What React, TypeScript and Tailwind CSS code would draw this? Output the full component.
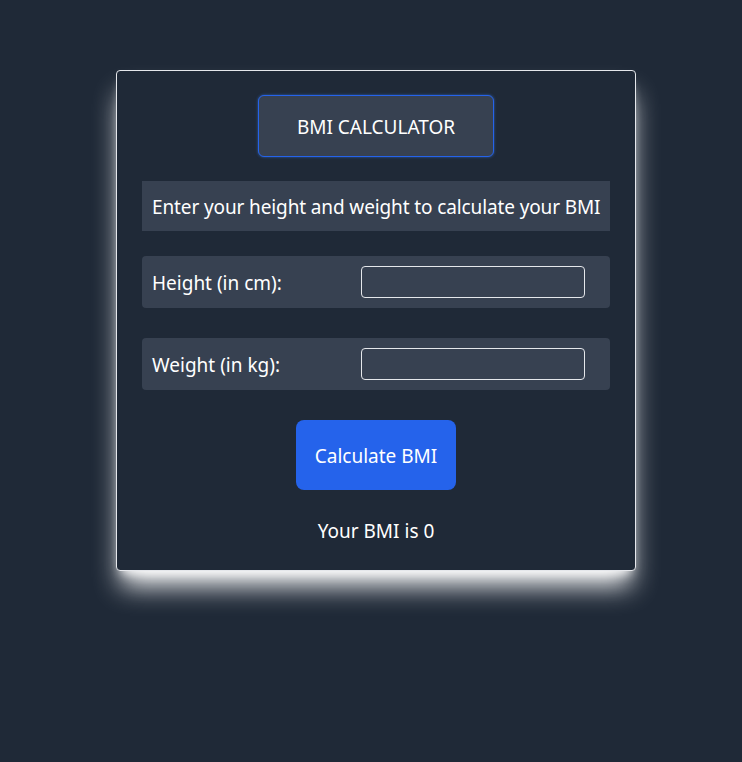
import React, { useState } from "react";

export default function App() {
  const [h, setH] = useState("");
  const [w, setW] = useState("");
  const [bmi, setBmi] = useState(0);
  const calc = () => {
    const hh = parseFloat(h) / 100;
    const ww = parseFloat(w);
    if (hh > 0 && ww > 0) setBmi(Math.round((ww / (hh * hh)) * 100) / 100);
  };
  return (
    <div
      className="min-h-[762px] w-full bg-[#1f2937] text-white pt-[70px]"
      style={{ fontFamily: '"Noto Sans", "Open Sans", sans-serif' }}
    >
      <div className="ml-[116px] w-[520px] h-[501px] rounded-[4px] border border-[#e5e7eb] bg-[#1f2937] shadow-xl shadow-white/95 px-[25px] pt-[24px] flex flex-col items-center">
        <div className="w-[236px] h-[62px] pt-[2px] rounded-md border border-[#2563eb] bg-[#374151] shadow-[0_0_3px_rgba(59,130,246,0.6)] flex items-center justify-center text-[19px]">
          BMI CALCULATOR
        </div>
        <div className="mt-[24px] w-full h-[50px] pt-[2px] bg-[#374151] flex items-center px-[10px] text-[19px] tracking-[-0.12px] whitespace-nowrap">
          Enter your height and weight to calculate your BMI
        </div>
        <div className="mt-[25px] w-full h-[52px] bg-[#374151] rounded-[4px] flex items-center pl-[10px] text-[19px]">
          <span className="w-[209px] pt-[2px]">Height (in cm):</span>
          <input
            value={h}
            onChange={(e) => setH(e.target.value)}
            className="w-[224px] h-[32px] rounded-[4px] border border-[#e5e7eb] bg-transparent outline-none px-2 text-white"
          />
        </div>
        <div className="mt-[30px] w-full h-[52px] bg-[#374151] rounded-[4px] flex items-center pl-[10px] text-[19px]">
          <span className="w-[209px] pt-[2px]">Weight (in kg):</span>
          <input
            value={w}
            onChange={(e) => setW(e.target.value)}
            className="w-[224px] h-[32px] rounded-[4px] border border-[#e5e7eb] bg-transparent outline-none px-2 text-white"
          />
        </div>
        <button
          onClick={calc}
          className="mt-[30px] w-[160px] h-[70px] pt-[3px] rounded-lg bg-[#2563eb] text-[19px] text-white"
        >
          Calculate BMI
        </button>
        <div className="mt-[28px] text-[19px] leading-[26px]">Your BMI is {bmi}</div>
      </div>
    </div>
  );
}
